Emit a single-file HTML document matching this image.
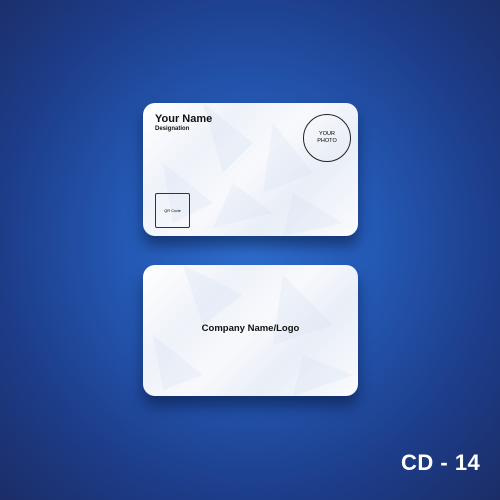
<!DOCTYPE html><html><head><style>
body{margin:0;width:500px;height:500px;overflow:hidden;background:radial-gradient(ellipse at 50% 48%,#2f6fd0 0%,#2459b4 35%,#1d3d8a 70%,#1b2d66 100%);font-family:"Liberation Sans",sans-serif;position:relative}
.card{position:absolute;left:143px;width:215px;border-radius:12px;background:linear-gradient(135deg,#fff 0%,#eef2f9 30%,#f8f9fd 50%,#e9eef7 70%,#fafbfe 100%);box-shadow:0 10px 14px rgba(5,15,50,.5);overflow:hidden}
.card svg{position:absolute;left:0;top:0}
.t{position:absolute;color:#111}
</style></head><body>
<div class="card" style="top:103px;height:133px">
<svg width="215" height="133"><g fill="#d8e1f0" opacity=".3"><polygon points="60,0 110,40 80,70"/><polygon points="130,20 170,70 120,90"/><polygon points="20,60 70,100 30,120"/><polygon points="150,90 200,120 140,133"/><polygon points="90,80 130,110 70,125"/></g></svg>
<div class="t" style="left:12px;top:10px;font-size:11px;font-weight:bold">Your Name</div>
<div class="t" style="left:12px;top:23px;font-size:6px;font-weight:bold">Designation</div>
<div style="position:absolute;left:160px;top:11px;width:46px;height:46px;border:1px solid #222;border-radius:50%;font-size:5.5px;text-align:center;line-height:7px;display:flex;align-items:center;justify-content:center">YOUR<br>PHOTO</div>
<div style="position:absolute;left:12px;top:90px;width:33px;height:33px;border:1px solid #333;border-radius:2px;font-size:4px;display:flex;align-items:center;justify-content:center">QR Code</div>
</div>
<div class="card" style="top:265px;height:131px">
<svg width="215" height="131"><g fill="#d8e1f0" opacity=".3"><polygon points="40,0 100,30 60,60"/><polygon points="140,10 190,60 130,80"/><polygon points="10,70 60,110 20,125"/><polygon points="160,90 210,110 150,131"/></g></svg>
<div class="t" style="left:0;width:215px;text-align:center;top:58px;font-size:9.5px;font-weight:bold">Company Name/Logo</div>
</div>
<div style="position:absolute;left:401px;top:450px;color:#fff;font-size:22px;font-weight:bold;letter-spacing:.5px">CD - 14</div>
</body></html>
